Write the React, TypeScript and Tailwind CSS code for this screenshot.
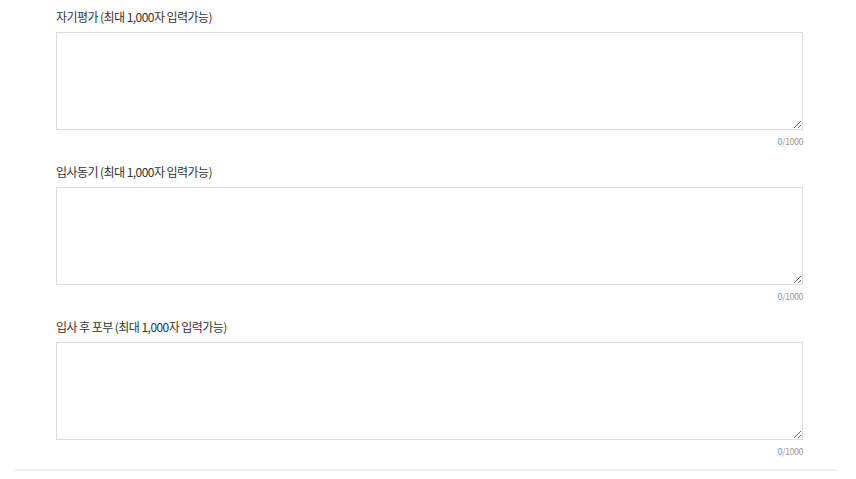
import React from "react";

const items = ["자기평가 (최대 1,000자 입력가능)", "입사동기 (최대 1,000자 입력가능)", "입사 후 포부 (최대 1,000자 입력가능)"];

export default function App() {
  return (
    <div className="w-[856px] h-[479px] bg-white overflow-hidden" style={{ fontFamily: '"Noto Sans CJK KR", "Noto Sans", sans-serif' }}>
      <div className="ml-[15px] w-[823px] border-b-2 border-[#eeeeee]">
        <div className="pl-[41px] pr-[35px] pt-[8px] pb-[10px]">
          {items.map((t, i) => (
            <div key={i} className={i < items.length - 1 ? "mb-[14px]" : ""}>
              <div className="text-[12px] leading-[18px] tracking-[-0.55px] text-[#333333] mb-[6px]">{t}</div>
              <textarea className="block w-full h-[98px] border border-[#dddddd] bg-white outline-none resize-y" />
              <div className="mt-[5px] text-right text-[9px] leading-[14px] tracking-[-0.5px] text-[#999999]">
                <span className="text-[#5b9bd5]">0</span>/1000
              </div>
            </div>
          ))}
        </div>
      </div>
    </div>
  );
}
